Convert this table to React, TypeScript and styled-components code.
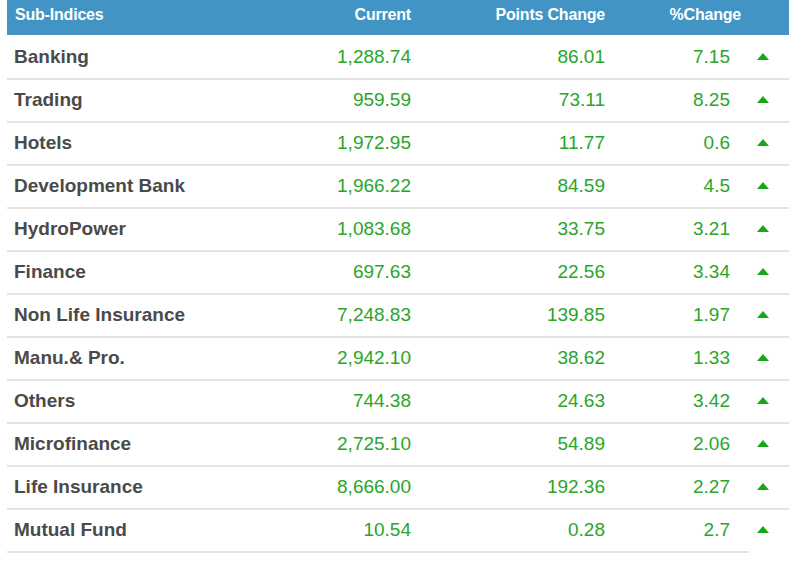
import React from "react";
import styled, { createGlobalStyle } from "styled-components";

const GlobalStyle = createGlobalStyle`
  *, *::before, *::after {
    box-sizing: border-box;
  }
  html, body {
    margin: 0;
    padding: 0;
    background: #ffffff;
  }
  body {
    font-family: "Liberation Sans", Arial, sans-serif;
  }
`;

const COLUMNS = "253px 158px 194px 137px 40px";

const Page = styled.div`
  padding: 0 0 0 7px;
  width: 789px;
`;

const Table = styled.div`
  display: flex;
  flex-direction: column;
`;

const HeaderRow = styled.div`
  display: grid;
  grid-template-columns: ${COLUMNS};
  height: 35px;
  background: #4294c4;
  margin-bottom: 2px;
`;

const HeaderCell = styled.div<{ $align?: "left" | "right"; $padRight?: number }>`
  padding: 6px ${(p) => p.$padRight ?? 7}px 0 8px;
  text-align: ${(p) => p.$align ?? "right"};
  color: #ffffff;
  font-size: 16px;
  font-weight: bold;
  letter-spacing: -0.2px;
  white-space: nowrap;
`;

const Row = styled.div`
  display: grid;
  grid-template-columns: ${COLUMNS};
`;

const Cell = styled.div<{ $padRight?: number; $noBorder?: boolean }>`
  height: 43px;
  display: flex;
  align-items: center;
  justify-content: flex-end;
  padding: 0 ${(p) => p.$padRight ?? 7}px 1px 7px;
  border-bottom: 2px solid ${(p) => (p.$noBorder ? "transparent" : "#e4e4e4")};
  color: #2aa52a;
  font-size: 19px;
  white-space: nowrap;
`;

const NameCell = styled(Cell)`
  justify-content: flex-start;
  color: #4a4a4a;
  font-weight: bold;
`;

const ArrowCell = styled(Cell)`
  justify-content: flex-start;
  padding: 0 0 2px 8px;
`;

const UpArrow = styled.span`
  display: block;
  width: 0;
  height: 0;
  border-left: 6.5px solid transparent;
  border-right: 6.5px solid transparent;
  border-bottom: 7px solid #16a716;
`;

type SubIndex = {
  name: string;
  current: string;
  points: string;
  pct: string;
};

const rows: SubIndex[] = [
  { name: "Banking", current: "1,288.74", points: "86.01", pct: "7.15" },
  { name: "Trading", current: "959.59", points: "73.11", pct: "8.25" },
  { name: "Hotels", current: "1,972.95", points: "11.77", pct: "0.6" },
  { name: "Development Bank", current: "1,966.22", points: "84.59", pct: "4.5" },
  { name: "HydroPower", current: "1,083.68", points: "33.75", pct: "3.21" },
  { name: "Finance", current: "697.63", points: "22.56", pct: "3.34" },
  { name: "Non Life Insurance", current: "7,248.83", points: "139.85", pct: "1.97" },
  { name: "Manu.& Pro.", current: "2,942.10", points: "38.62", pct: "1.33" },
  { name: "Others", current: "744.38", points: "24.63", pct: "3.42" },
  { name: "Microfinance", current: "2,725.10", points: "54.89", pct: "2.06" },
  { name: "Life Insurance", current: "8,666.00", points: "192.36", pct: "2.27" },
  { name: "Mutual Fund", current: "10.54", points: "0.28", pct: "2.7" },
];

export default function App() {
  return (
    <>
      <GlobalStyle />
      <Page>
        <Table>
          <HeaderRow>
            <HeaderCell $align="left">Sub-Indices</HeaderCell>
            <HeaderCell>Current</HeaderCell>
            <HeaderCell>Points Change</HeaderCell>
            <HeaderCell $padRight={8}>%Change</HeaderCell>
            <HeaderCell />
          </HeaderRow>
          {rows.map((r, i) => (
            <Row key={r.name}>
              <NameCell>{r.name}</NameCell>
              <Cell>{r.current}</Cell>
              <Cell>{r.points}</Cell>
              <Cell $padRight={19}>{r.pct}</Cell>
              <ArrowCell $noBorder={i === rows.length - 1}>
                <UpArrow />
              </ArrowCell>
            </Row>
          ))}
        </Table>
      </Page>
    </>
  );
}
